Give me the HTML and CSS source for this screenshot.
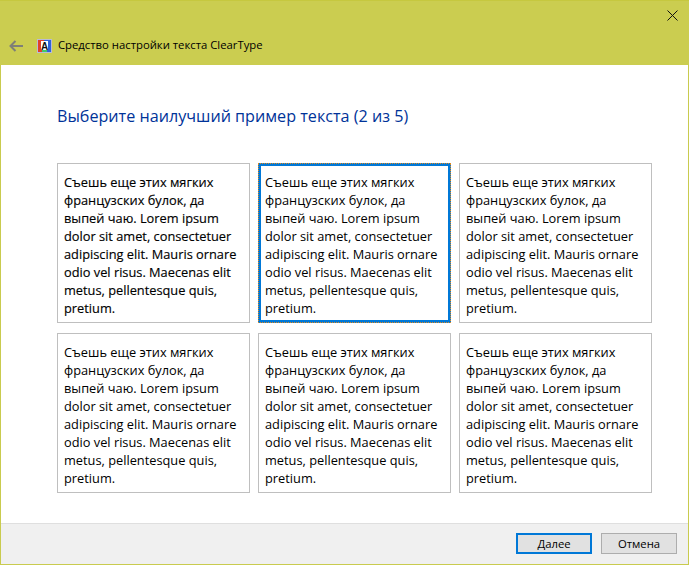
FILE: index.html
```html
<!DOCTYPE html>
<html lang="ru">
<head>
<meta charset="utf-8">
<title>ClearType</title>
<link rel="stylesheet" href="styles.css">
</head>
<body>
<div class="window">
  <header class="titlebar">
    <div class="close-row">
      <svg class="close" width="11" height="11" viewBox="0 0 11 11"><path d="M.5.5l10 10M10.500.5l-10 10" stroke="#111" stroke-width="1" fill="none"/></svg>
    </div>
    <div class="title-row">
      <svg class="back" width="14" height="12" viewBox="0 0 14 12"><path d="M6.500 1L1.500 6l5 5M1.500 6H14" stroke="#7f8077" stroke-width="2" fill="none"/></svg>
      <svg class="app-icon" width="15" height="14" viewBox="0 0 15 14">
        <rect width="15" height="14" fill="#b9bbd8"/>
        <rect x="1" y="1" width="6" height="12" fill="#e0402c"/>
        <rect x="7" y="1" width="7" height="12" fill="#2f62d8"/>
        <rect x="5" y="11" width="5" height="2" fill="#42c868"/>
        <rect x="4" y="2" width="7" height="9" fill="#fff"/>
        <text class="icon-letter" x="7.500" y="10.500" text-anchor="middle">A</text>
      </svg>
      <span class="title">Средство настройки текста ClearType</span>
    </div>
  </header>
  <main class="content">
    <h1 class="heading">Выберите наилучший пример текста (2 из 5)</h1>
    <div class="grid">
      <div class="card bold"><p>Съешь еще этих мягких французских булок, да выпей чаю. Lorem ipsum dolor sit amet, consectetuer adipiscing elit. Mauris ornare odio vel risus. Maecenas elit metus, pellentesque quis, pretium.</p></div>
      <div class="card selected"><p>Съешь еще этих мягких французских булок, да выпей чаю. Lorem ipsum dolor sit amet, consectetuer adipiscing elit. Mauris ornare odio vel risus. Maecenas elit metus, pellentesque quis, pretium.</p></div>
      <div class="card"><p>Съешь еще этих мягких французских булок, да выпей чаю. Lorem ipsum dolor sit amet, consectetuer adipiscing elit. Mauris ornare odio vel risus. Maecenas elit metus, pellentesque quis, pretium.</p></div>
      <div class="card"><p>Съешь еще этих мягких французских булок, да выпей чаю. Lorem ipsum dolor sit amet, consectetuer adipiscing elit. Mauris ornare odio vel risus. Maecenas elit metus, pellentesque quis, pretium.</p></div>
      <div class="card"><p>Съешь еще этих мягких французских булок, да выпей чаю. Lorem ipsum dolor sit amet, consectetuer adipiscing elit. Mauris ornare odio vel risus. Maecenas elit metus, pellentesque quis, pretium.</p></div>
      <div class="card"><p>Съешь еще этих мягких французских булок, да выпей чаю. Lorem ipsum dolor sit amet, consectetuer adipiscing elit. Mauris ornare odio vel risus. Maecenas elit metus, pellentesque quis, pretium.</p></div>
    </div>
  </main>
  <footer class="footer">
    <button class="btn primary"><span class="ul">Д</span>алее</button>
    <button class="btn">Отмена</button>
  </footer>
</div>
</body>
</html>
```
FILE: styles.css
```css
* { box-sizing: border-box; }
html, body { margin: 0; height: 100%; }
body { font-family: "Open Sans", "Noto Sans", sans-serif; color: #000; overflow: hidden; }
.window {
  width: 689px; height: 565px; display: flex; flex-direction: column;
  border: solid #c9cb4e; border-width: 0 1px 1px 1px; background: #fff;
}
.titlebar { height: 65px; background: #cbcd50; border-top: 1px solid #c6c83f; display: flex; flex-direction: column; margin: 0 -1px; }
.close-row { height: 8px; display: flex; justify-content: flex-end; padding-right: 11px; padding-top: 9px; }
.close { flex: none; }
.title-row { display: flex; align-items: center; margin-top: 28px; height: 15px; padding-left: 9px; }
.back { flex: none; }
.app-icon { margin-left: 14px; flex: none; }
.icon-letter { font: 700 10px "Liberation Sans", sans-serif; fill: #111; }
.title { margin: -2px 0 0 6px; font-size: 11.300px; color: #000; white-space: nowrap; }
.content { flex: 1; padding: 40px 0 0 56px; }
.heading { margin: 0; font-size: 16.150px; line-height: 22px; font-weight: 400; color: #003399; white-space: nowrap; }
.grid { display: grid; grid-template-columns: repeat(3, 193px); grid-auto-rows: 160px; column-gap: 8px; row-gap: 10px; margin-top: 36px; }
.card { border: 1px solid #bfbfbf; padding: 9px 6px 0 6px; font-size: 12.800px; line-height: 18px; }
.card p { margin: 0; margin-right: -4px; }
.bold p { -webkit-text-stroke: 0.15px #000; }
.selected { border: 3px solid #0078d7; padding: 7px 4px 0 4px; outline: 1px dotted #e08a20; outline-offset: -1px; }
.footer { height: 41px; background: #f0f0f0; border-top: 1px solid #dfdfdf; display: flex; justify-content: flex-end; gap: 9px; padding: 9px 11px 0 0; }
.btn { width: 76px; height: 21px; background: #e1e1e1; border: 1px solid #adadad; font: 11.300px "Open Sans", sans-serif; color: #000; padding: 0; }
.primary { border: 2px solid #0078d7; }
.ul { text-decoration: underline; }
```
